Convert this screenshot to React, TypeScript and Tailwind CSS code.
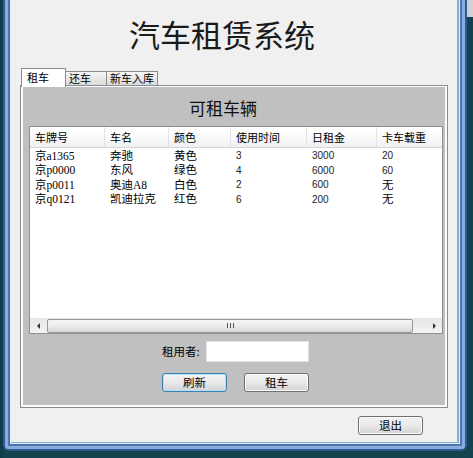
import React from "react";

const cols = ["w-[75px]", "w-[64px]", "w-[62px]", "w-[76px]", "w-[70px]", "w-[83px]"];
const headers = ["车牌号", "车名", "颜色", "使用时间", "日租金", "卡车载重"];
const rows = [
  ["京a1365", "奔驰", "黄色", "3", "3000", "20"],
  ["京p0000", "东风", "绿色", "4", "6000", "60"],
  ["京p0011", "奥迪A8", "白色", "2", "600", "无"],
  ["京q0121", "凯迪拉克", "红色", "6", "200", "无"],
];

function Btn({ label, focused }: { label: string; focused?: boolean }) {
  return (
    <div
      className={
        "w-[65px] h-[19px] rounded-[3px] border flex items-center justify-center text-[11.5px] leading-none text-black bg-gradient-to-b from-[#f4f4f4] via-[#e9e9e9] to-[#d3d3d3] " +
        (focused
          ? "border-[#3c7fb1] shadow-[inset_0_0_0_1px_#b4e2f8]"
          : "border-[#707070] shadow-[inset_0_0_0_1px_#fbfbfb]")
      }
    >
      {label}
    </div>
  );
}

export default function App() {
  return (
    <div className="w-[473px] h-[458px] bg-[#13444e] flex overflow-hidden font-['Noto_Sans_CJK_SC',sans-serif] text-black">
      <div className="w-[3px] shrink-0 bg-[#0f3c46]" />
      {/* window frame */}
      <div className="w-[464px] h-[451px] shrink-0 rounded-b-[6px] border-x-2 border-b-2 border-t-0 border-[#2f5a96] bg-[#8aaedb] flex">
        <div className="flex-1 flex border-x-[3px] border-b-[3px] border-t-0 border-[#8aaedb] rounded-b-[4px]">
          <div className="flex-1 flex border-x-2 border-b-2 border-t-0 border-[#4a75b2]">
            <div className="flex-1 flex border-x border-b border-t-0 border-[#e3ebf5]">
              {/* content */}
              <div className="w-[446px] h-[442px] bg-[#f0f0f0] flex flex-col">
                <div className="pt-[18px] pl-[118px] text-[31px] leading-[31px] text-[#1a1a1a] whitespace-nowrap">
                  汽车租赁系统
                </div>
                {/* tab pane */}
                <div className="mt-[19px] ml-[9px] flex flex-col">
                  <div className="h-[17px] flex items-start pl-[1px] text-[11px] leading-none whitespace-nowrap">
                    <div className="relative z-10 w-[45px] h-[19px] border border-b-0 border-[#898c95] bg-white flex items-center pl-[5px] pb-[2px]">
                      租车
                    </div>
                    <div className="mt-[3px] w-[41px] h-[14px] border border-l-0 border-b-0 border-[#898c95] bg-gradient-to-b from-[#f6f6f6] to-[#dadada] flex items-center pl-[3px]">
                      还车
                    </div>
                    <div className="mt-[3px] w-[51px] h-[14px] border border-l-0 border-b-0 border-[#898c95] bg-gradient-to-b from-[#f6f6f6] to-[#dadada] flex items-center pl-[3px]">
                      新车入库
                    </div>
                  </div>
                  <div className="w-[428px] h-[323px] border border-[#898c95] bg-[#fcfcfc] pt-[1px] px-[2px] pb-[2px] flex">
                    <div className="flex-1 bg-[#c0c0c0] flex flex-col">
                      <div className="pt-[12px] pl-[166px] text-[17px] leading-[17px] whitespace-nowrap text-[#111]">
                        可租车辆
                      </div>
                      {/* scroll pane */}
                      <div className="mt-[10px] ml-[6px] w-[414px] h-[208px] border border-[#8f8f8f] bg-white flex flex-col">
                        <div className="flex-1 overflow-hidden">
                          <div className="w-[430px]">
                            <div className="h-[21px] flex border-b border-[#d5d5d5] bg-gradient-to-b from-white via-[#fafafa] to-[#eef0f3]">
                              {headers.map((h, i) => (
                                <div
                                  key={i}
                                  className={cols[i] + " shrink-0 h-full flex items-center pl-[5px] text-[11px] leading-none whitespace-nowrap border-r border-[#e2e3e5]"}
                                >
                                  {h}
                                </div>
                              ))}
                            </div>
                            <div className="pt-[1px]">
                              {rows.map((r, ri) => (
                                <div key={ri} className="h-[14.5px] flex">
                                  {r.map((c, ci) => {
                                    const num = /^\d+$/.test(c);
                                    return (
                                      <div
                                        key={ci}
                                        className={
                                          cols[ci] +
                                          " shrink-0 h-full flex items-center pl-[5px] leading-none whitespace-nowrap " +
                                          (num
                                            ? "text-[10px] font-['Liberation_Sans',sans-serif] text-[#222]"
                                            : "text-[11.5px] font-['Liberation_Serif','Noto_Sans_CJK_SC',serif]")
                                        }
                                      >
                                        {c}
                                      </div>
                                    );
                                  })}
                                </div>
                              ))}
                            </div>
                          </div>
                        </div>
                        {/* horizontal scrollbar */}
                        <div className="h-[15px] flex bg-gradient-to-b from-[#e6e6e6] to-[#f3f3f3]">
                          <div className="w-[16px] flex items-center justify-center">
                            <div className="w-0 h-0 border-y-[3px] border-y-transparent border-r-[3px] border-r-[#333]" />
                          </div>
                          <div className="flex-1 flex items-center">
                            <div className="ml-[1px] w-[366px] h-[14px] rounded-[2px] border border-[#979797] bg-gradient-to-b from-[#f5f5f5] via-[#ececec] to-[#d6d6d6] flex items-center justify-center gap-[2px]">
                              <div className="w-px h-[5px] bg-[#555]" />
                              <div className="w-px h-[5px] bg-[#555]" />
                              <div className="w-px h-[5px] bg-[#555]" />
                            </div>
                          </div>
                          <div className="w-[16px] flex items-center justify-center">
                            <div className="w-0 h-0 border-y-[3px] border-y-transparent border-l-[3px] border-l-[#333]" />
                          </div>
                        </div>
                      </div>
                      {/* renter row */}
                      <div className="mt-[7px] h-[21px] flex items-center">
                        <div className="ml-[139px] w-[44px] text-[11.5px] leading-none whitespace-nowrap">租用者:</div>
                        <div className="w-[103px] h-[21px] bg-white border border-[#e2e2e2]" />
                      </div>
                      <div className="mt-[11px] flex ml-[139px] gap-[17px]">
                        <Btn label="刷新" focused />
                        <Btn label="租车" />
                      </div>
                    </div>
                  </div>
                </div>
                <div className="mt-[8px] ml-[347px]">
                  <Btn label="退出" />
                </div>
              </div>
            </div>
          </div>
        </div>
      </div>
      <div className="w-[6px] shrink-0 flex flex-col">
        <div className="h-[17px] bg-[#cfd3d6]" />
      </div>
    </div>
  );
}
